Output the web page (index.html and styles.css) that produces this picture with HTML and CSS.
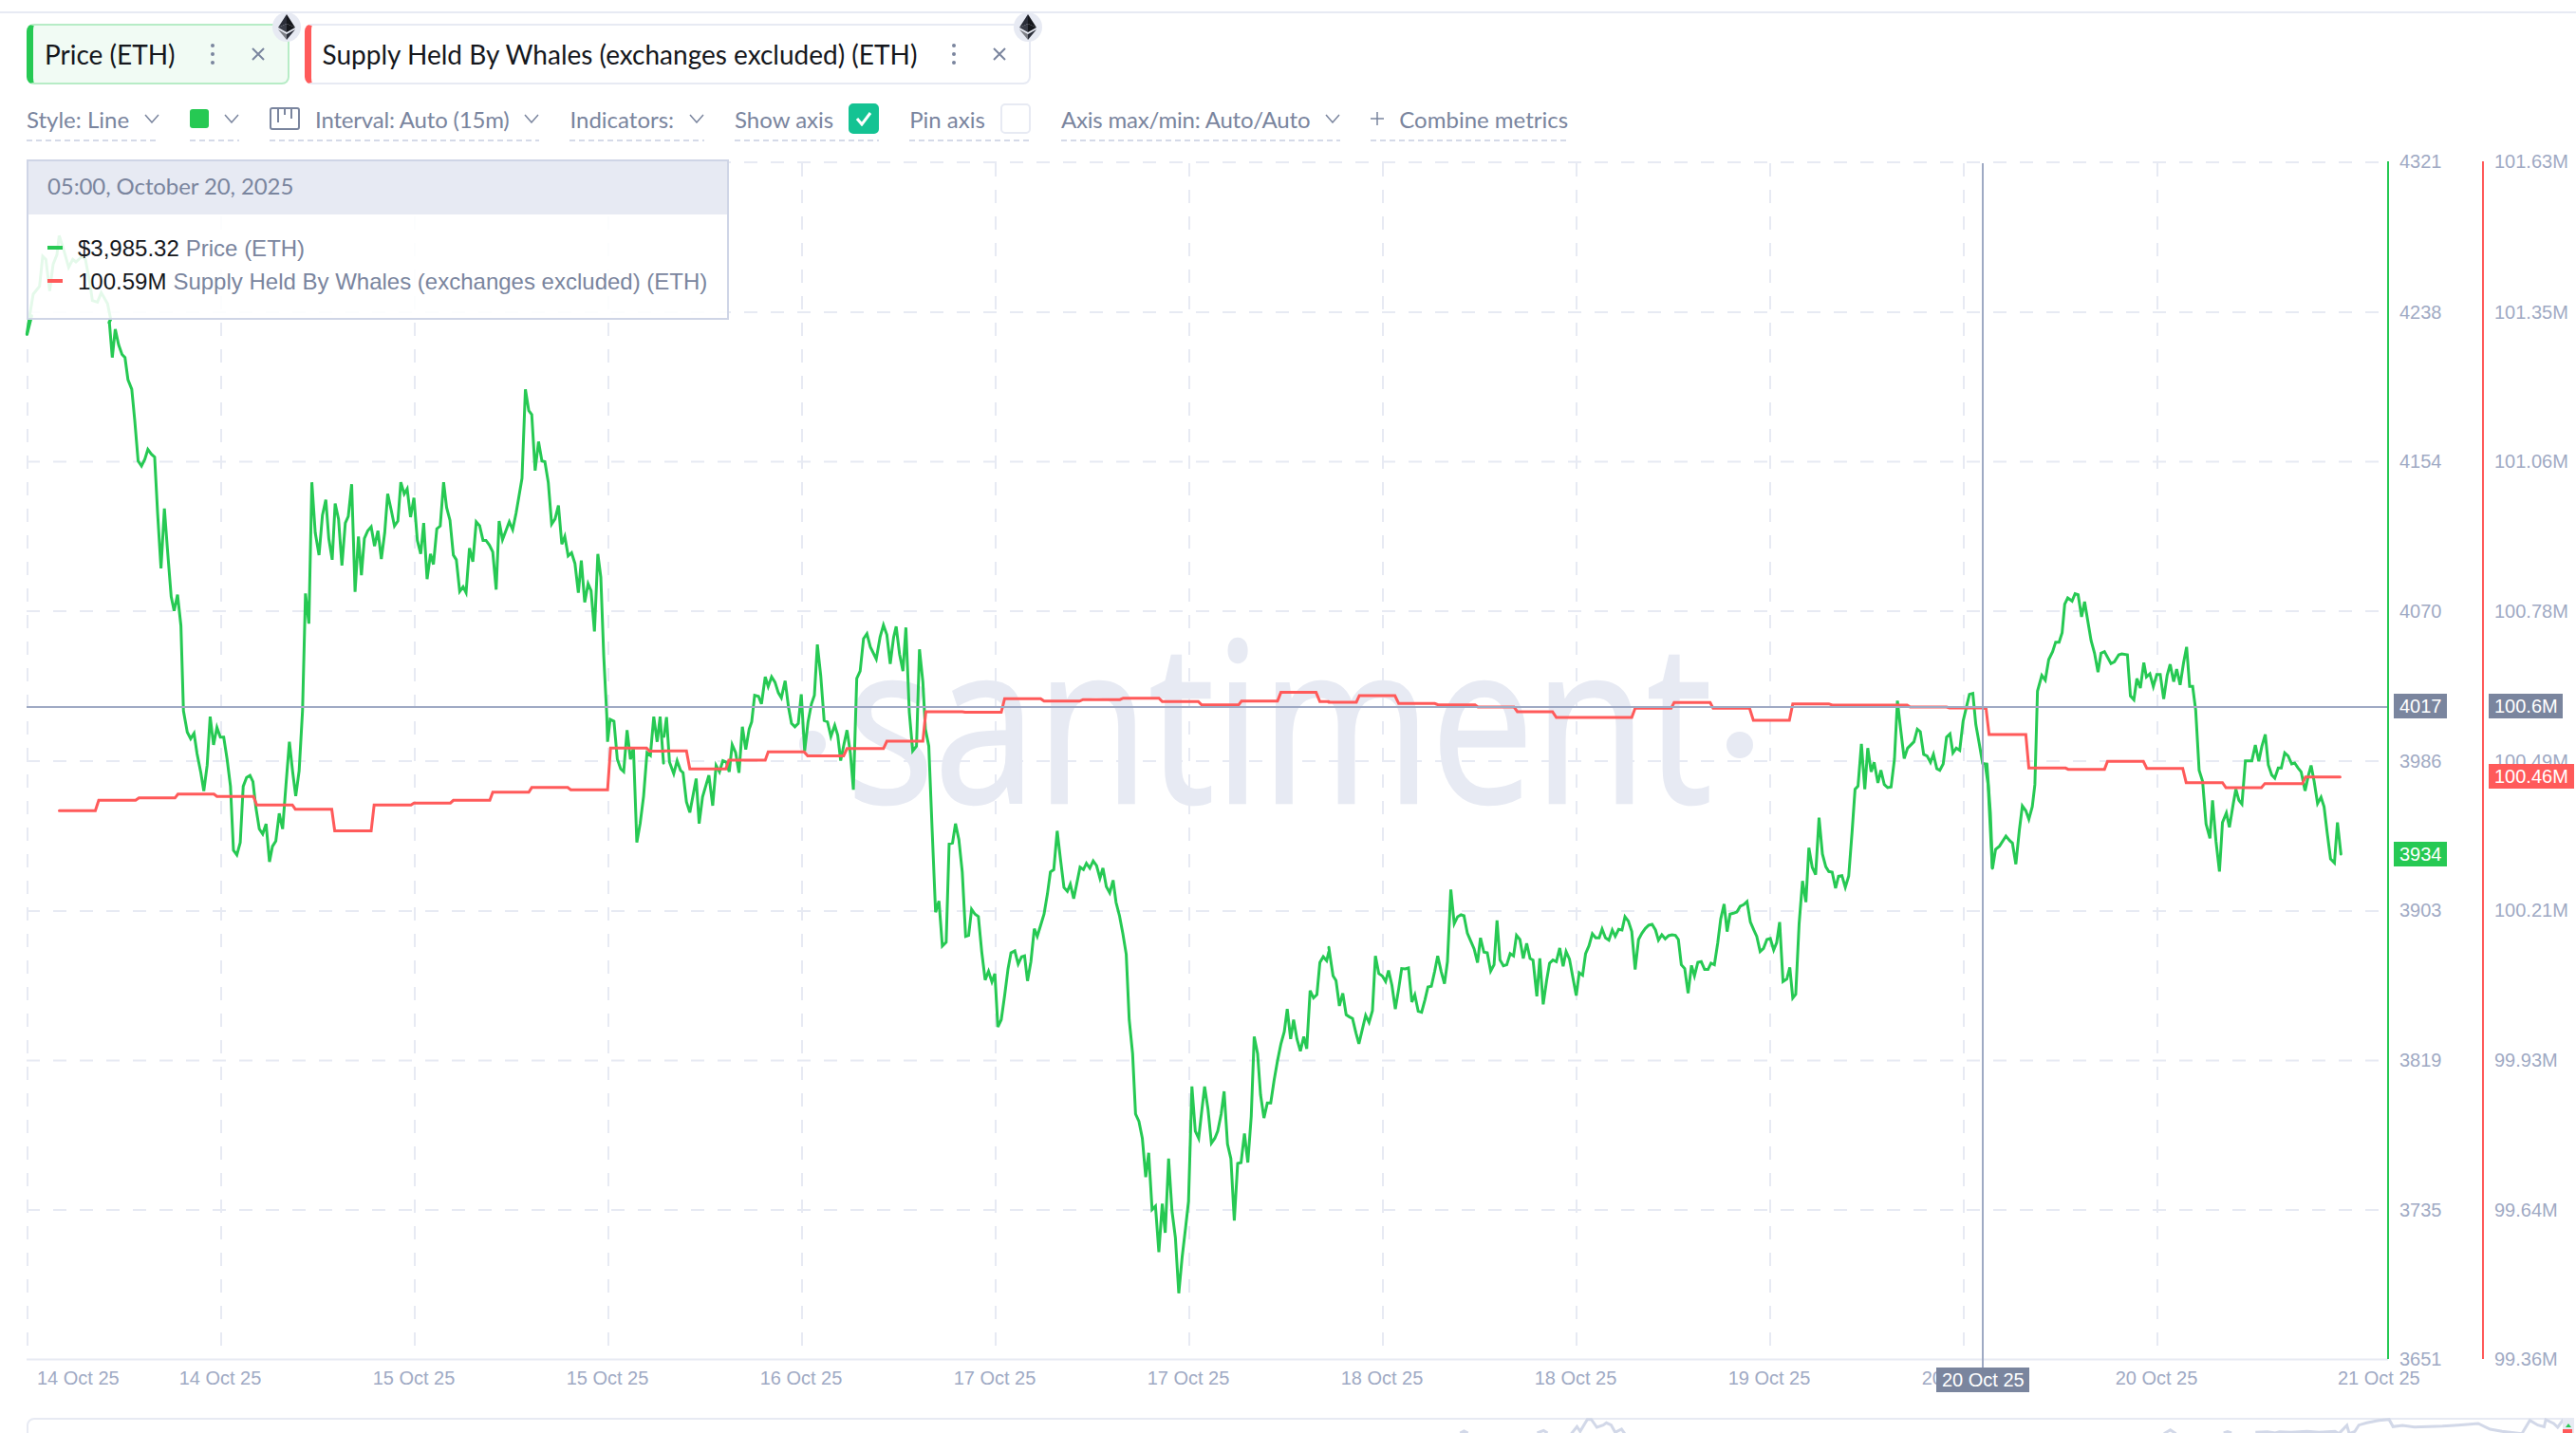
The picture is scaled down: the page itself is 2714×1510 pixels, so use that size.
FILE: index.html
```html
<!DOCTYPE html>
<html lang="en">
<head>
<meta charset="utf-8">
<title>Santiment chart</title>
<link rel="stylesheet" href="styles.css">
</head>
<body>
<div class="page">
  <div class="top-rule"></div>

  <div class="chips">
    <div class="chip chip-green">
      <span class="chip-label">Price (ETH)</span>
      <svg class="chip-dots" width="6" height="24" viewBox="0 0 6 24"><circle cx="3" cy="3" r="2"/><circle cx="3" cy="12" r="2"/><circle cx="3" cy="21" r="2"/></svg>
      <svg class="chip-x" width="14" height="14" viewBox="0 0 14 14"><path d="M1 1L13 13M13 1L1 13"/></svg>
      <span class="eth-badge"><svg width="18" height="27" viewBox="0 0 18 27"><path class="e1" d="M9 0L0 14L9 10Z"/><path class="e2" d="M9 0L18 14L9 10Z"/><path class="e3" d="M0 14L9 10L9 19Z"/><path class="e4" d="M18 14L9 10L9 19Z"/><path class="e5" d="M0 16L9 21L9 27Z"/><path class="e1" d="M18 16L9 21L9 27Z"/></svg></span>
    </div>
    <div class="chip chip-red">
      <span class="chip-label">Supply Held By Whales (exchanges excluded) (ETH)</span>
      <svg class="chip-dots" width="6" height="24" viewBox="0 0 6 24"><circle cx="3" cy="3" r="2"/><circle cx="3" cy="12" r="2"/><circle cx="3" cy="21" r="2"/></svg>
      <svg class="chip-x" width="14" height="14" viewBox="0 0 14 14"><path d="M1 1L13 13M13 1L1 13"/></svg>
      <span class="eth-badge"><svg width="18" height="27" viewBox="0 0 18 27"><path class="e1" d="M9 0L0 14L9 10Z"/><path class="e2" d="M9 0L18 14L9 10Z"/><path class="e3" d="M0 14L9 10L9 19Z"/><path class="e4" d="M18 14L9 10L9 19Z"/><path class="e5" d="M0 16L9 21L9 27Z"/><path class="e1" d="M18 16L9 21L9 27Z"/></svg></span>
    </div>
  </div>

  <div class="toolbar">
    <div class="tool"><span>Style: Line</span><svg class="chev" width="16" height="10" viewBox="0 0 16 10"><path d="M1 1L8 9L15 1"/></svg></div>
    <div class="tool"><span class="swatch"></span><svg class="chev" width="16" height="10" viewBox="0 0 16 10"><path d="M1 1L8 9L15 1"/></svg></div>
    <div class="tool"><svg class="cal" width="32" height="24" viewBox="0 0 32 24"><rect x="1" y="1" width="30" height="22" rx="2"/><path d="M9 1V16M16 1V8M23 1V12"/></svg><span class="tool-text tight">Interval: Auto (15m)</span><svg class="chev" width="16" height="10" viewBox="0 0 16 10"><path d="M1 1L8 9L15 1"/></svg></div>
    <div class="tool"><span>Indicators:</span><svg class="chev" width="16" height="10" viewBox="0 0 16 10"><path d="M1 1L8 9L15 1"/></svg></div>
    <div class="tool"><span>Show axis</span><span class="check check-on"><svg width="18" height="16" viewBox="0 0 18 16"><path d="M2 8L7 14L16 2"/></svg></span></div>
    <div class="tool"><span>Pin axis</span><span class="check"></span></div>
    <div class="tool"><span class="tight">Axis max/min: Auto/Auto</span><svg class="chev" width="16" height="10" viewBox="0 0 16 10"><path d="M1 1L8 9L15 1"/></svg></div>
    <div class="tool"><svg class="plus" width="14" height="14" viewBox="0 0 14 14"><path d="M7 0V14M0 7H14"/></svg><span class="tool-text">Combine metrics</span></div>
  </div>

  <div class="chart">
    <svg class="plot" width="2714" height="1344" viewBox="0 150 2714 1344">
      <text class="wm" x="892" y="846" textLength="912" lengthAdjust="spacingAndGlyphs">santiment</text>
      <circle class="wm-dot" cx="856" cy="784" r="14"/>
      <circle class="wm-dot" cx="1833" cy="785" r="14"/>

      <path class="grid" d="M28 171H2516M28 329H2516M28 486.500H2516M28 644H2516M28 802H2516M28 960H2516M28 1117.500H2516M28 1275H2516"/>
      <path class="grid" d="M29 172V1432M233 172V1432M437 172V1432M641 172V1432M845 172V1432M1049 172V1432M1253 172V1432M1457 172V1432M1661 172V1432M1865 172V1432M2069 172V1432M2273 172V1432"/>
      <path class="base" d="M28 1432.500H2516"/>

      <g class="green">
        <polyline transform="translate(20 230) scale(.3333)" points="25,366 35,300 45,240 65,215 75,120 85,130 97,230 108,145 120,115 127,55 140,95 157,155 170,130 180,138 200,120 210,130 225,210 232,260 248,265 260,235 280,270 290,320 285,330"/>
        <polyline transform="translate(0 300) scale(.4464 .4082)" points="258,95 265,188 272,115 280,155 288,180 295,188 302,245 311,270 318,350 326,455 334,468 342,450 349,425 357,437 365,445 372,590 380,732 388,578 395,680 404,805 411,842 419,800 427,880 433,1100 442,1155 450,1172 458,1158 465,1210 474,1260 481,1307 489,1240 496,1115 504,1188 512,1143 520,1168 528,1168 536,1225 544,1295 551,1460 559,1472 567,1440 574,1295 582,1272 590,1267 597,1283 604,1350 612,1405 620,1418 628,1392 636,1490 643,1450 651,1436 659,1365 667,1405 675,1290 683,1180 691,1260 698,1320 706,1255 714,1100 721,797 729,875 736,510 744,640 753,698 761,595 769,555 776,655 784,710 791,565 799,605 807,725 815,615 822,598 830,515 838,793 846,650 853,750 860,655 868,635 876,625 884,675 892,635 900,708 908,640 915,540 923,580 931,623 939,610 946,510 954,540 961,527 969,600 977,550 985,660 993,695 1000,615 1008,760 1016,695 1023,722 1031,630 1039,623 1047,510 1054,575 1062,608 1070,698 1077,710 1085,792 1093,780 1100,795 1108,680 1116,715 1124,612 1132,622 1140,660 1147,660 1155,672 1163,690 1171,787 1178,610 1186,658 1194,635 1202,612 1210,632 1218,590 1225,545 1232,500 1240,270 1248,325 1255,335 1263,480 1271,405 1279,455 1286,457 1294,510 1302,618 1310,605 1318,570 1326,670 1333,650 1341,700 1349,692 1357,720 1365,795 1372,712 1380,820 1388,772 1395,790 1403,895 1411,695 1418,755 1425,960 1432,1110 1434,1180 1440,1122 1449,1127 1457,1225 1465,1250 1472,1257 1480,1150 1488,1225 1495,1195 1503,1440 1511,1390 1519,1320 1527,1208 1535,1215 1543,1115 1551,1180 1558,1115 1566,1235"/>
        <polyline transform="translate(700 600) scale(.4464 .5102)" points="-1,345 5,305 12,398 22,422 30,395 38,415 44,420 52,480 60,502 75,432 82,525 90,470 105,425 114,488 122,405 130,418 138,395 146,398 153,418 160,362 168,378 176,420 184,325 192,372 200,330 206,315 213,260 222,262 229,278 238,222 245,242 253,222 261,233 269,255 276,265 285,230 293,285 300,318 308,325 316,318 323,258 331,375 339,315 347,278 354,260 361,155 369,220 377,312 385,315 393,345 402,322 409,342 416,395 424,360 431,332 439,380 446,455 454,225 462,210 470,143 478,133 486,160 500,185 509,140 517,115 525,135 533,195 541,140 547,118 555,175 563,210 570,120 578,295 586,375 595,365 602,165 610,232 616,330 624,365 632,540 640,708 648,685 656,778 665,770 672,567 680,565 687,525 695,558 703,625 711,758 718,756 725,702 733,712 741,717 749,790 757,848 765,830 773,852 780,835 787,945 795,930 803,880 811,825 818,792 827,788 835,815 843,800 850,798 857,850 865,810 873,742 880,758 888,735 896,712 904,670 911,625 919,620 927,540 935,600 943,657 951,665 958,650 966,680 973,650 981,615 989,620 996,607 1004,617 1012,602 1020,612 1028,638 1035,617 1043,655 1051,668 1059,642 1066,688 1074,715 1082,752 1090,795 1097,930 1105,1000 1112,1125 1120,1140 1128,1175 1136,1255 1143,1205 1151,1322 1159,1315 1167,1410 1175,1310 1182,1370 1190,1217 1198,1325 1206,1380 1214,1495 1222,1420 1230,1360 1237,1305 1245,1068 1253,1160 1261,1175 1268,1120 1275,1068 1283,1115 1291,1185 1299,1175 1306,1160 1314,1125 1321,1078 1329,1187 1337,1217 1345,1345 1353,1227 1361,1225 1369,1165 1377,1225 1385,1130 1392,965 1400,1000 1407,1085 1415,1133 1423,1102 1431,1102 1439,1055 1447,1015 1455,980 1463,955 1470,908 1478,970 1485,930 1493,970 1501,995 1509,965 1516,990 1524,870 1532,885 1540,878 1547,812 1555,800 1563,808 1568,790"/>
        <polyline transform="translate(1400 600) scale(.4464 .3333)" points="0,1195 10,1285 17,1300 25,1380 33,1340 41,1408 49,1415 56,1420 64,1465 71,1500 79,1455 87,1410 95,1432 103,1395 110,1222 118,1278 126,1285 134,1303 141,1268 149,1315 157,1390 165,1325 172,1262 180,1263 188,1260 196,1368 203,1345 211,1397 219,1400 227,1360 234,1320 242,1318 250,1270 257,1222 265,1270 273,1310 280,1240 288,1012 296,1120 304,1098 312,1092 319,1095 327,1150 335,1175 343,1200 351,1243 358,1165 366,1210 374,1212 382,1270 390,1250 397,1110 404,1235 412,1253 420,1250 428,1215 436,1222 443,1157 451,1170 459,1230 467,1182 475,1230 482,1235 491,1350 498,1230 506,1375 514,1300 521,1245 529,1235 537,1240 545,1197 553,1255 560,1208 568,1232 576,1290 584,1347 591,1275 599,1283 606,1215 614,1190 622,1152 630,1165 638,1165 645,1137 653,1165 661,1172 669,1140 676,1160 684,1138 692,1140 699,1098 707,1112 715,1145 723,1265 731,1170 739,1150 747,1135 755,1125 763,1122 771,1140 778,1172 786,1155 794,1168 802,1158 810,1155 818,1157 825,1170 832,1250 840,1262 848,1340 856,1252 863,1285 871,1242 879,1240 887,1265 895,1265 902,1245 910,1250 918,1180 925,1105 933,1058 940,1145 947,1090 955,1087 963,1083 971,1065 979,1060 987,1050 995,1115 1003,1140 1010,1160 1018,1208 1026,1198 1034,1170 1042,1167 1050,1203 1057,1180 1064,1115 1072,1303 1081,1295 1088,1258 1095,1355 1102,1343 1110,1120 1118,985 1126,1052 1133,880 1141,942 1149,965 1157,785 1165,900 1173,940 1180,955 1188,957 1196,1008 1203,970 1211,968 1219,1005 1227,970 1235,830 1242,695 1249,685 1257,552 1265,695 1272,565 1280,640 1287,610 1296,675 1303,635 1311,680 1319,690 1327,688 1335,600 1342,415 1350,510 1358,598 1366,565 1381,545 1389,505 1396,513 1404,585 1412,590 1420,610 1427,585 1435,630 1442,635 1450,615 1458,530 1466,520 1473,580 1481,565 1489,572 1497,480 1504,440 1512,395 1520,392 1527,490 1535,550 1543,613 1549,615 1556,680 1566,945"/>
        <polyline transform="translate(2000 600) scale(.4554 .3333)" points="205,615 213,770 218,945 225,885 234,875 249,843 258,858 264,865 272,932 280,825 287,748 295,763 302,790 310,750 316,680 322,385 332,335 340,350 348,285 357,260 364,230 372,230 379,200 385,110 392,90 402,100 409,77 416,80 424,150 431,102 438,160 446,225 454,265 462,325 469,265 477,260 492,298 500,292 510,270 517,267 530,270 537,400 545,412 552,345 560,375 568,295 574,340 582,330 590,370 598,332 606,332 614,410 622,335 629,300 637,355 644,315 652,365 660,295 667,245 674,370 681,370 688,445 696,635 704,670 712,805 721,850 727,730 735,860 743,955 750,800 759,770 766,815 775,740 781,695 788,730 795,742 803,605 818,605 826,555 834,607 841,560 849,522 856,618 864,650 871,660 879,628 886,628 894,580 902,590 910,615 917,612 925,628 932,640 941,700 949,650 955,620 962,670 970,740 978,720 985,750 992,830 1000,915 1009,928 1016,800 1024,900"/>
        <polyline class="ln-start" transform="translate(0 300) scale(.4464 .4082)" points="64,128 75,80"/>
      </g>

      <g class="red">
        <polyline transform="translate(0 300) scale(.4464 .4082)" points="140,1358 225,1358 233,1331 320,1331 328,1325 413,1325 420,1315 505,1315 512,1321 598,1321 606,1343 690,1343 697,1354 783,1354 790,1410 876,1410 883,1343 970,1343 977,1338 1063,1338 1070,1331 1156,1331 1163,1310 1248,1310 1255,1298 1340,1298 1347,1304 1434,1304 1441,1196 1526,1196 1533,1204 1568,1204"/>
        <polyline transform="translate(700 600) scale(.4464 .5102)" points="0,375 52,375 60,412 145,412 152,394 238,394 245,377 330,377 338,385 423,385 431,370 517,370 525,355 610,355 617,294 703,294 710,295 795,295 803,267 888,267 896,272 980,272 988,269 1075,269 1083,266 1167,266 1175,273 1260,273 1268,280 1355,280 1362,272 1447,272 1455,254 1538,254 1547,273 1568,273"/>
        <polyline transform="translate(1400 600) scale(.4464 .3333)" points="0,420 65,420 72,399 156,399 165,424 250,424 258,428 345,428 352,435 437,435 445,450 528,450 537,468 715,468 723,439 808,439 815,421 900,421 907,439 993,439 1002,477 1087,477 1095,425 1180,425 1188,429 1365,429 1372,435 1458,435 1465,438 1545,438"/>
        <polyline transform="translate(2000 600) scale(.4554 .3333)" points="195,438 203,440 210,522 295,522 302,628 387,628 393,632 477,632 484,607 567,607 575,629 658,629 666,674 750,674 758,690 840,690 848,677 935,677 942,656 1022,656"/>
      </g>

      <path class="cross" d="M28 745H2516M2089 172V1441"/>
      <path class="axis-g" d="M2516 170V1432"/>
      <path class="axis-r" d="M2616 170V1432"/>

      <g class="tick">
        <text x="2528" y="177">4321</text><text x="2528" y="336">4238</text><text x="2528" y="493">4154</text><text x="2528" y="651">4070</text><text x="2528" y="809">3986</text><text x="2528" y="966">3903</text><text x="2528" y="1124">3819</text><text x="2528" y="1282">3735</text><text x="2528" y="1439">3651</text>
        <text x="2628" y="177">101.63M</text><text x="2628" y="336">101.35M</text><text x="2628" y="493">101.06M</text><text x="2628" y="651">100.78M</text><text x="2628" y="809">100.49M</text><text x="2628" y="966">100.21M</text><text x="2628" y="1124">99.93M</text><text x="2628" y="1282">99.64M</text><text x="2628" y="1439">99.36M</text>
      </g>
      <g class="tick">
        <text x="39" y="1459">14 Oct 25</text><text x="2463" y="1459">21 Oct 25</text>
      </g>
      <g class="tick tick-mid">
        <text x="232" y="1459">14 Oct 25</text><text x="436" y="1459">15 Oct 25</text><text x="640" y="1459">15 Oct 25</text><text x="844" y="1459">16 Oct 25</text><text x="1048" y="1459">17 Oct 25</text><text x="1252" y="1459">17 Oct 25</text><text x="1456" y="1459">18 Oct 25</text><text x="1660" y="1459">18 Oct 25</text><text x="1864" y="1459">19 Oct 25</text><text x="2068" y="1459">20 Oct 25</text><text x="2272" y="1459">20 Oct 25</text>
      </g>

      <rect class="b-grey" x="2522" y="731" width="56" height="26"/>
      <rect class="b-grey" x="2622" y="731" width="78" height="26"/>
      <rect class="b-green" x="2522" y="887" width="56" height="26"/>
      <rect class="b-red" x="2622" y="805" width="90" height="26"/>
      <rect class="b-grey" x="2040" y="1441" width="98" height="26"/>
      <g class="b-text">
        <text x="2528" y="751">4017</text><text x="2628" y="751">100.6M</text><text x="2528" y="907">3934</text><text x="2628" y="825">100.46M</text><text x="2046" y="1461">20 Oct 25</text>
      </g>
    </svg>

    <div class="tip">
      <div class="tip-head">05:00, October 20, 2025</div>
      <div class="tip-body">
        <div class="tip-row"><span class="mark mark-g"></span><span class="val">$3,985.32</span> <span class="name">Price (ETH)</span></div>
        <div class="tip-row"><span class="mark mark-r"></span><span class="val">100.59M</span> <span class="name">Supply Held By Whales (exchanges excluded) (ETH)</span></div>
      </div>
    </div>
  </div>

  <div class="nav">
    <svg class="nav-svg" width="2684" height="16" viewBox="28 1494 2684 16">
      <g class="nav-line">
        <polyline transform="translate(1400 1480) scale(.838 .3333)" points="165,90 170,84 175,90"/>
        <polyline transform="translate(1400 1480) scale(.838 .3333)" points="262,90 270,82 275,90"/>
        <polyline transform="translate(1400 1480) scale(.838 .3333)" points="305,92 312,70 316,85 325,47 330,47 337,72 345,65 349,58 355,65 360,88 368,78 372,92"/>
        <polyline transform="translate(1400 1480) scale(.838 .3333)" points="1050,92 1058,80 1065,92"/>
        <polyline transform="translate(1400 1480) scale(.838 .3333)" points="1125,90 1130,86 1135,90"/>
        <polyline transform="translate(1400 1480) scale(.838 .3333)" points="1165,88 1180,86 1190,90 1195,86 1210,88 1230,85 1245,88 1265,85 1270,92 1280,66 1283,92 1290,85 1295,65 1305,58 1320,50 1333,47 1338,70 1350,66 1365,71 1400,68 1420,65 1445,60 1460,78 1475,85 1500,92 1510,50 1520,65 1528,70 1530,48 1540,60 1545,72 1552,48"/>
      </g>
      <rect class="nav-handle" x="2700" y="1494" width="12" height="16"/>
      <path class="nav-up" d="M2703 1504L2706 1500L2709 1504Z"/>
      <rect class="nav-red" x="2700" y="1506" width="10" height="4"/>
    </svg>
  </div>
</div>
</body>
</html>
```
FILE: styles.css
```css
html, body {
  margin: 0;
  padding: 0;
  background: #fff;
  height: 1510px;
  overflow: hidden;
}
.page {
  width: 2714px;
  height: 1510px;
  overflow: hidden;
  font-family: "Lato", "Liberation Sans", sans-serif;
  color: #7a859e;
}
.top-rule {
  height: 2px;
  margin-top: 12px;
  background: #e7eaf3;
}
.chips {
  display: flex;
  gap: 16px;
  margin-top: 11px;
  padding-left: 28px;
}
.chip {
  position: relative;
  display: flex;
  align-items: center;
  height: 64px;
  box-sizing: border-box;
  border: 2px solid #e7eaf3;
  border-left-width: 7px;
  border-radius: 8px;
  padding-left: 12px;
  padding-right: 24px;
}
.chip-green {
  background: #f1fbf4;
  border-color: #b7ecc6;
  border-left-color: #26c953;
}
.chip-red {
  border-left-color: #ff5a5a;
}
.chip-label {
  font-size: 28px;
  color: #15171c;
  white-space: nowrap;
}
.chip-dots {
  margin-left: 36px;
  fill: #7a859e;
}
.chip-x {
  margin-left: 38px;
  fill: none;
  stroke: #7a859e;
  stroke-width: 2;
}
.eth-badge {
  position: absolute;
  right: -14px;
  top: -14px;
  width: 30px;
  height: 31px;
  border-radius: 50%;
  background: #e7eaf3;
  display: flex;
  align-items: center;
  justify-content: center;
}
.e1 { fill: #2a2d38; }
.e2 { fill: #15171c; }
.e3 { fill: #3a3d48; }
.e4 { fill: #15171c; }
.e5 { fill: #7d7f86; }

.toolbar {
  display: flex;
  gap: 32px;
  margin-top: 21px;
  padding-left: 28px;
}
.tool {
  display: flex;
  align-items: center;
  height: 39px;
  box-sizing: border-box;
  padding-bottom: 9px;
  font-size: 24px;
  color: #7a859e;
  white-space: nowrap;
  background: repeating-linear-gradient(90deg, #d5dae8 0 6px, transparent 6px 10px) left bottom / 100% 2px no-repeat;
}
.tight {
  letter-spacing: -0.2px;
}
.chev {
  margin-left: 16px;
  fill: none;
  stroke: #7a859e;
  stroke-width: 1.500;
}
.swatch {
  width: 20px;
  height: 20px;
  border-radius: 3px;
  background: #26c953;
}
.cal {
  fill: none;
  stroke: #7a859e;
  stroke-width: 2;
}
.tool-text {
  margin-left: 16px;
}
.plus {
  fill: none;
  stroke: #7a859e;
  stroke-width: 1.500;
}
.check {
  width: 32px;
  height: 32px;
  box-sizing: border-box;
  margin-left: 16px;
  border: 2px solid #e7eaf3;
  border-radius: 5px;
  display: flex;
  align-items: center;
  justify-content: center;
}
.check-on {
  background: #14c393;
  border-color: #14c393;
}
.check-on svg {
  fill: none;
  stroke: #fff;
  stroke-width: 3;
}

.chart {
  position: relative;
  margin-top: 1px;
  height: 1344px;
}
.plot {
  display: block;
  font-family: "Liberation Sans", Arial, sans-serif;
}
.wm {
  font-family: "Open Sans", sans-serif;
  font-size: 234px;
  fill: #e7eaf3;
  stroke: #e7eaf3;
  stroke-width: 2.500;
}
.wm-dot { fill: #e7eaf3; }
.grid {
  fill: none;
  stroke: #e7eaf3;
  stroke-width: 2;
  stroke-dasharray: 14 14;
}
.base {
  fill: none;
  stroke: #e7eaf3;
  stroke-width: 2;
}
.green polyline, .red polyline {
  fill: none;
  stroke-width: 3;
  vector-effect: non-scaling-stroke;
  stroke-linecap: round;
}
.green polyline { stroke: #26c953; }
.red polyline { stroke: #ff5a5a; }
.cross {
  fill: none;
  stroke: #9faac4;
  stroke-width: 2;
}
.axis-g { stroke: #26c953; stroke-width: 2; }
.axis-r { stroke: #ff5a5a; stroke-width: 2; }
.tick text {
  font-size: 20px;
  fill: #9faac4;
}
.tick-mid text { text-anchor: middle; }
.b-grey { fill: #7a859e; }
.b-green { fill: #26c953; }
.b-red { fill: #ff5a5a; }
.b-text text {
  font-size: 20px;
  fill: #fff;
}

.tip {
  position: absolute;
  left: 28px;
  top: 18px;
  width: 740px;
  height: 169px;
  box-sizing: border-box;
  border: 2px solid #cfd5e6;
  background: rgba(255, 255, 255, 0.88);
}
.tip-head {
  height: 56px;
  box-sizing: border-box;
  padding-bottom: 5px;
  display: flex;
  align-items: center;
  padding-left: 20px;
  background: #e7eaf3;
  font-size: 24px;
  letter-spacing: -0.1px;
  color: #7a859e;
}
.tip-body {
  padding-top: 18px;
  font-family: "Liberation Sans", Arial, sans-serif;
  font-size: 24px;
}
.tip-row {
  display: flex;
  align-items: center;
  gap: 7px;
  height: 35px;
  padding-left: 52px;
  position: relative;
  white-space: nowrap;
}
.mark {
  position: absolute;
  left: 20px;
  top: 15px;
  width: 16px;
  height: 4px;
}
.mark-g { background: #26c953; }
.mark-r { background: #ff5a5a; }
.val { color: #15171c; }
.name { color: #7a859e; }

.nav {
  position: relative;
  margin-left: 28px;
  width: 2684px;
  height: 60px;
  box-sizing: border-box;
  border: 2px solid #e7eaf3;
  border-radius: 8px;
}
.nav-svg {
  position: absolute;
  left: -2px;
  top: -2px;
}
.nav-line polyline {
  fill: none;
  stroke: #d2d8e8;
  stroke-width: 3;
  vector-effect: non-scaling-stroke;
}
.nav-handle { fill: #e7eaf3; }
.nav-up { fill: #26c953; }
.nav-red { fill: #ff5a5a; }
```
